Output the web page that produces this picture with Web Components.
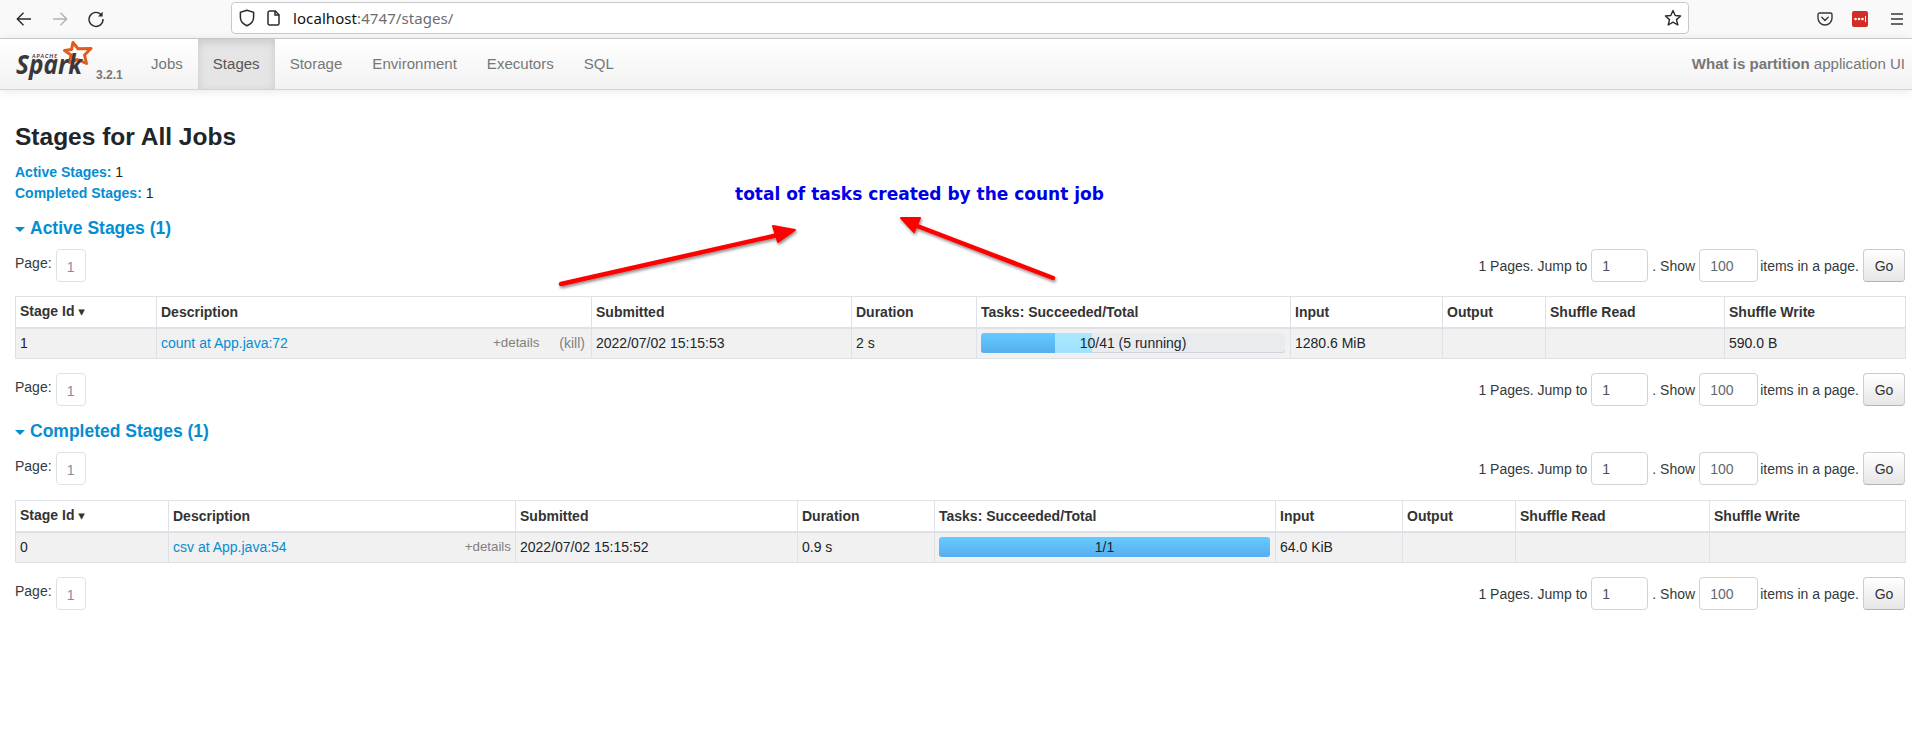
<!DOCTYPE html>
<html><head><meta charset="utf-8"><style>
html,body{margin:0;padding:0;background:#fff;font-family:"Liberation Sans",Arial,sans-serif;font-size:14px;color:#212529;overflow:hidden;height:734px}
</style></head><body>
<browser-bar></browser-bar>
<spark-nav></spark-nav>
<stages-page></stages-page>
<note-overlay></note-overlay>
<script>
function def(name, html){
  customElements.define(name, class extends HTMLElement{
    connectedCallback(){
      if(this.shadowRoot) return;
      const r=this.attachShadow({mode:'open'});
      r.innerHTML = typeof html==='function'? html(this): html;
    }
  });
}
const BLUE='#058dd2';
def('browser-bar',`<style>
:host{display:flex;align-items:center;height:38px;background:#f9f9fa;border-bottom:1px solid #cfcfd1;box-sizing:content-box;position:relative}
svg{display:block;flex:none}
.nav{display:flex;align-items:center;margin-left:15px;gap:18px;width:216px}
.url{width:1458px;height:32px;margin-top:-2px;box-sizing:border-box;background:#fff;border:1px solid #c9c9cb;border-radius:4px;display:flex;align-items:center;padding:0 6px 0 7px;font-family:"Noto Sans",sans-serif;font-size:15px;color:#111;}
.url span.t{margin-left:12px;letter-spacing:.08px}
.url i{font-style:normal;color:#6e6e72}
.url .star{margin-left:auto}
.url .pg{margin-left:12px}
.right{display:flex;align-items:center;margin-left:128px}
.lp{width:16px;height:16px;background:#d32d27;border-radius:2px;display:flex;align-items:center;justify-content:center;margin:0 22px 0 19px}
</style>
<div class="nav">
<svg width="18" height="18" viewBox="0 0 18 18" fill="none" stroke="#2b2b2f" stroke-width="1.4"><path d="M16 9H2.500M8.500 2.800 2.300 9l6.200 6.200"/></svg>
<svg width="18" height="18" viewBox="0 0 18 18" fill="none" stroke="#b1b1b3" stroke-width="1.4"><path d="M2 9h13.500M9.500 2.800 15.700 9l-6.200 6.200"/></svg>
<svg width="18" height="18" viewBox="0 0 18 18" fill="none" stroke="#2b2b2f" stroke-width="1.4"><path d="M14.600 5.200A7 7 0 1 0 16 9"/><path d="M15.600 1.800v4.600H11" fill="#2b2b2f" stroke="none"/></svg>
</div>
<div class="url">
<svg width="16" height="18" viewBox="0 0 16 18" fill="none" stroke="#2b2b2f" stroke-width="1.5"><path d="M8 1.200 1.400 3.400v5.200c0 3.600 2.700 6.500 6.600 8.200 3.900-1.700 6.600-4.600 6.600-8.200V3.400z"/></svg>
<svg class="pg" width="14" height="16" viewBox="0 0 14 16" fill="none" stroke="#2b2b2f" stroke-width="1.5"><path d="M2.600 1h5.600L12 4.800v8.400c0 1-.7 1.800-1.600 1.800H2.600c-.9 0-1.600-.8-1.600-1.800V2.800C1 1.800 1.700 1 2.600 1z"/><path d="M8 1v4h4"/></svg>
<span class="t">localhost<i>:4747/stages/</i></span>
<svg class="star" width="18" height="18" viewBox="0 0 18 18" fill="none" stroke="#2b2b2f" stroke-width="1.4" stroke-linejoin="round"><path d="M9 1.500 11.200 6.500 16.600 7 12.500 10.600 13.800 16 9 13.100 4.200 16 5.500 10.600 1.400 7 6.800 6.500z"/></svg>
</div>
<div class="right">
<svg width="16" height="16" viewBox="0 0 16 16" fill="none" stroke="#38383d" stroke-width="1.4" stroke-linejoin="round"><path d="M2.500 2h11c.8 0 1.500.7 1.500 1.500V7c0 3.900-3.100 7-7 7s-7-3.100-7-7V3.500C1 2.700 1.700 2 2.500 2z"/><path d="M4.800 6.300 8 9.400l3.200-3.100" stroke-linecap="round"/></svg>
<div class="lp"><svg width="12" height="6" viewBox="0 0 12 6" fill="#fff"><circle cx="1.500" cy="3" r="1.300"/><circle cx="5" cy="3" r="1.300"/><circle cx="8.500" cy="3" r="1.300"/><rect x="11" y="0" width="1" height="6"/></svg></div>
<svg width="14" height="14" viewBox="0 0 14 14" stroke="#38383d" stroke-width="1.300"><path d="M1 2h12M1 7h12M1 12h12"/></svg>
</div>`);

def('spark-nav',`<style>
:host{display:flex;align-items:stretch;height:50px;box-sizing:content-box;background:linear-gradient(#fff,#f2f2f2);border-bottom:1px solid #d4d4d4;box-shadow:0 1px 10px rgba(0,0,0,.1);color:#777;font-size:15.05px;position:relative}
.brand{width:136px;flex:none;padding-left:15px;box-sizing:border-box;position:relative;display:flex}
.brand svg{display:block}
.ver{position:absolute;left:96px;top:29px;font-size:12px;font-weight:bold;color:#777}
a{display:flex;align-items:center;padding:0 15px 2px;color:#777;text-decoration:none}
a.on{background:#e5e5e5;color:#555;box-shadow:inset 0 3px 8px rgba(0,0,0,.125)}
.nb{display:flex}
.app{margin-left:auto;padding:0 7px 2px 0;display:flex;align-items:center;white-space:pre}
</style>
<div class="brand">
<svg width="80" height="50" viewBox="0 0 80 50" style="overflow:visible">
<path d="M58 3.500 63 9.800 76 9.500 69.500 16 71.500 24.500 62.500 20.500 54.500 23.500 56 16 49.500 11.500 56.500 10.500z" fill="none" stroke="#e25a1c" stroke-width="3" stroke-linejoin="round"/>
<text x="17" y="19" font-family="Lato,'Liberation Sans'" font-size="5.5" font-weight="bold" letter-spacing="1" fill="#333" font-style="italic">APACHE</text>
<text x="1" y="35" font-family="'Open Sans','Liberation Sans'" font-size="26" font-weight="700" textLength="66" lengthAdjust="spacingAndGlyphs" fill="#3a383c" font-style="italic">Spark</text>
</svg>
<span class="ver">3.2.1</span>
</div>
<div class="nb"><a>Jobs</a><a class="on">Stages</a><a>Storage</a><a>Environment</a><a>Executors</a><a>SQL</a></div>
<div class="app"><b>What is partition</b> application UI</div>`);

def('pager-row',`<style>
:host{display:flex;align-items:flex-start;color:#333a40;font-size:14px;height:33px}
.box{display:inline-flex;align-items:center;justify-content:center;box-sizing:border-box;border:1px solid #dee2e6;border-radius:4px;height:100%;background:#fff}
.p{width:30px;margin-left:4px;color:#868e96;padding-top:2px}
.lab{line-height:29px}
.r{margin-left:auto;display:flex;height:100%;align-items:center}
.i{width:57px;color:#495057;justify-content:flex-start;padding-left:10px;border-color:#ced4da}
.i2{width:59px;color:#5f6872;justify-content:flex-start;padding-left:10px;border-color:#ced4da}
.go{box-sizing:border-box;width:42px;height:100%;display:flex;align-items:center;justify-content:center;border:1px solid #ccc;border-bottom-color:#b3b3b3;border-radius:4px;background:linear-gradient(#fff,#e6e6e6);color:#333}
</style>
<span class="lab">Page:</span><span class="box p">1</span>
<div class="r">1 Pages. Jump to<span class="box i" style="margin:0 4px">1</span>. Show<span class="box i2" style="margin:0 2px 0 4px">100</span>items in a page.<span class="go" style="margin-left:4px">Go</span></div>`);

def('stage-bar',(h)=>{
 const t=+h.getAttribute('total'),d=+h.getAttribute('done'),s=+h.getAttribute('started')||0;
 return `<style>
:host{display:block;position:relative;height:20px;border-radius:3px;overflow:hidden;background:#e9ecef;box-shadow:inset 0 -1px 0 #ced4da}
.a,.b{position:absolute;top:0;bottom:0}
.a{left:0;background:linear-gradient(#64cbff,#57aeec)}
.b{background:linear-gradient(#a8e9ff,#a0e2ff)}
.t{position:absolute;inset:0;text-align:center;line-height:20px;color:#212529}
</style><div class="a" style="width:${d/t*100}%"></div><div class="b" style="left:${d/t*100}%;width:${s/t*100}%"></div><div class="t"><slot></slot></div>`;});

const COLS=(w)=>`<colgroup>${w.map(x=>`<col style="width:${x}px">`).join('')}</colgroup>`;
function table(w,id,desc,kill,sub,dur,bar,inp,shw){
 return `<table style="border-collapse:collapse;table-layout:fixed;width:1890px;font-size:14px;line-height:20px">${COLS(w)}
<thead><tr>${['Stage Id <span class="sort">▾</span>','Description','Submitted','Duration','Tasks: Succeeded/Total','Input','Output','Shuffle Read','Shuffle Write'].map(x=>`<th>${x}</th>`).join('')}</tr></thead>
<tbody><tr><td>${id}</td><td><a>${desc}</a>${kill?'<span class="k">(kill)</span>':''}<span class="d">+details</span></td><td>${sub}</td><td>${dur}</td><td class="pb">${bar}</td><td>${inp}</td><td></td><td></td><td>${shw}</td></tr></tbody></table>`;
}
def('stages-page',`<style>
:host{display:block;padding:0 7px 0 15px;box-sizing:border-box;width:1912px}
h3{font-size:24.5px;line-height:29px;margin:0;padding-top:32px;color:#212529;font-weight:bold}
ul{list-style:none;margin:11px 0 0;padding:0;line-height:21px}
ul b{color:${BLUE}}
a{color:${BLUE};text-decoration:none}
h4{font-size:17.5px;line-height:21px;margin:0;color:${BLUE};font-weight:bold;display:flex;align-items:center}
h4 .c{width:0;height:0;border-left:5px solid transparent;border-right:5px solid transparent;border-top:5px solid ${BLUE};margin:2px 5px 0 0}
h4{margin-top:14px}
pager-row{display:flex}
.tbl{margin:14px 0 14px}
.tbl.b{margin-top:15px}
th,td{border:1px solid #dee2e6;padding:4px;text-align:left;box-sizing:border-box;white-space:nowrap;overflow:hidden}
th{font-weight:bold;color:#333;border-bottom:2px solid #dee2e6;height:31px}
.sort{font-family:"DejaVu Sans",sans-serif;font-size:13px;font-weight:bold}
td{background:#f1f1f1;height:31px;color:#212529}
td.pb{padding:3px 5px 4px 4px}
.d{float:right;font-size:13.33px;color:gray}
.k{float:right;color:gray;margin:0 2px 0 20px}
</style>
<h3>Stages for All Jobs</h3>
<ul><li><b>Active Stages:</b> 1</li><li><b>Completed Stages:</b> 1</li></ul>
<h4><span class="c"></span>Active Stages (1)</h4>
<pager-row style="margin-top:10px"></pager-row>
<div class="tbl">${table([141,435,260,125,314,152,103,179,181],1,'count at App.java:72',1,'2022/07/02 15:15:53','2 s','<stage-bar total="41" done="10" started="5">10/41 (5 running)</stage-bar>','1280.6 MiB','590.0 B')}</div>
<pager-row></pager-row>
<h4 style="position:relative;top:1px"><span class="c"></span>Completed Stages (1)</h4>
<pager-row style="margin-top:11px"></pager-row>
<div class="tbl b">${table([153,347,282,137,341,127,113,194,196],0,'csv at App.java:54',0,'2022/07/02 15:15:52','0.9 s','<stage-bar total="1" done="1">1/1</stage-bar>','64.0 KiB','')}</div>
<pager-row></pager-row>`);

def('note-overlay',`<style>
:host{position:absolute;left:0;top:0;width:1912px;height:734px;pointer-events:none;display:block}
.txt{position:absolute;left:735px;top:184px;font:bold 17px "DejaVu Sans",sans-serif;color:#0000e6;white-space:nowrap}
svg{position:absolute;left:0;top:0}
</style>
<div class="txt">total of tasks created by the count job</div>
<svg width="1912" height="734"><defs><filter id="s" x="-10%" y="-30%" width="120%" height="160%"><feDropShadow dx="1" dy="2" stdDeviation="1.500" flood-color="#000" flood-opacity=".45"/></filter></defs>
<g filter="url(#s)" fill="#ff0000" stroke="#ff0000" stroke-linecap="round" stroke-linejoin="round">
<path d="M561 284 778 235" stroke-width="4.500" fill="none"/><path d="M795 230 773 226 778 242z" stroke-width="2"/>
<path d="M1053 278 912 224" stroke-width="4.500" fill="none"/><path d="M901 218 920 218 914 232z" stroke-width="2"/>
</g></svg>`);
</script>
</body></html>
